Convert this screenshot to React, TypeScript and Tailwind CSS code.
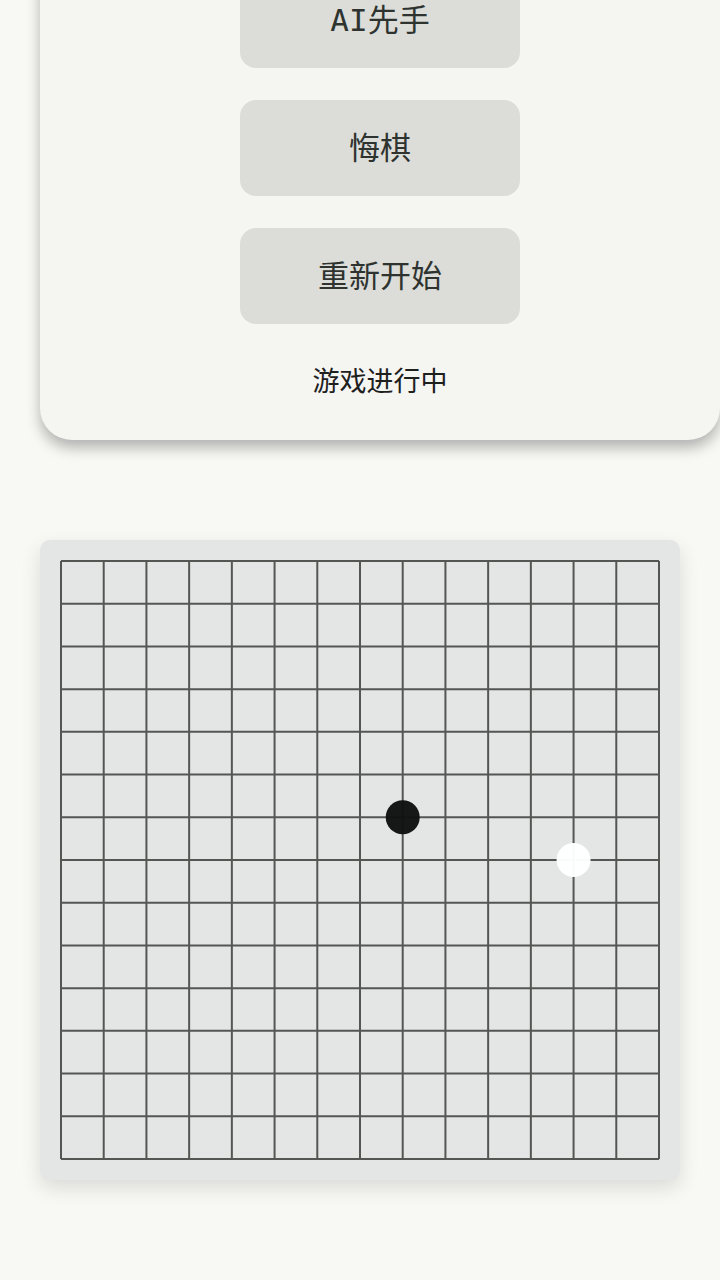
import React from "react";

const SIZE = 15;
const START = 21;
const END = 619;
const STEP = (END - START) / (SIZE - 1);

type Stone = { col: number; row: number; color: "black" | "white" };

const stones: Stone[] = [
  { col: 8, row: 6, color: "black" },
  { col: 12, row: 7, color: "white" },
];

const buttons = ["AI先手", "悔棋", "重新开始"];

const Board = () => {
  const lines = Array.from({ length: SIZE }, (_, i) => START + i * STEP);
  return (
    <svg width={640} height={640} viewBox="0 0 640 640" className="block">
      {lines.map((p, i) => (
        <g key={i}>
          <line x1={START} y1={p} x2={END} y2={p} stroke="#545654" strokeWidth={2} />
          <line x1={p} y1={START} x2={p} y2={END} stroke="#545654" strokeWidth={2} />
        </g>
      ))}
      {stones.map((s, i) => (
        <circle
          key={i}
          cx={START + s.col * STEP}
          cy={START + s.row * STEP}
          r={17}
          fill={s.color === "black" ? "#101110" : "#ffffff"}
          fillOpacity={0.97}
        />
      ))}
    </svg>
  );
};

export default function App() {
  return (
    <div className="min-h-screen w-[720px] overflow-hidden bg-[#f8f9f5] font-['DejaVu_Sans_Mono','Noto_Sans_CJK_SC',monospace]">
      <div className="ml-10 -mt-[60px] w-[680px] rounded-b-[32px] bg-[#f5f6f2] pt-8 pb-11 shadow-[0_8px_14px_rgba(0,0,0,0.28)]">
        <div className="flex flex-col items-center gap-8">
          {buttons.map((label) => (
            <button
              key={label}
              className="flex h-24 w-[280px] items-center justify-center rounded-2xl bg-[#dcddd9] text-[31px] leading-none text-[#2f3330]"
            >
              {label}
            </button>
          ))}
        </div>
        <p className="mt-10 text-center text-[27px] leading-8 text-[#1e201e] font-['Noto_Sans_CJK_SC',sans-serif]">
          游戏进行中
        </p>
      </div>

      <div className="mt-[100px] ml-10 w-[640px] rounded-[10px] bg-[#e3e6e5] shadow-[0_8px_20px_rgba(0,0,0,0.12)]">
        <Board />
      </div>
    </div>
  );
}
